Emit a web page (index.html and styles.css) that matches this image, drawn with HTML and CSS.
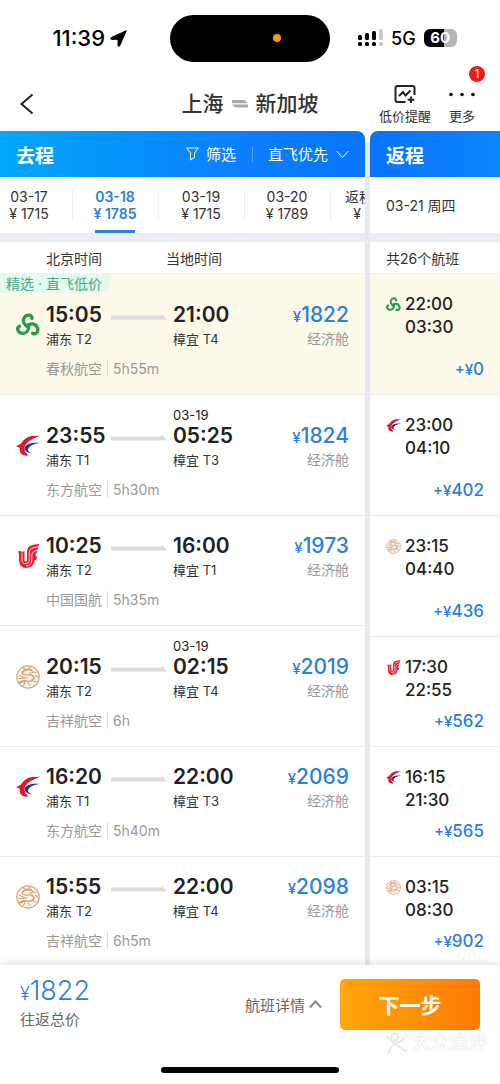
FILE: index.html
```html
<!DOCTYPE html>
<html lang="zh-CN">
<head>
    <meta charset="UTF-8">
    <meta name="viewport" content="width=device-width, initial-scale=1.0">
    <title>上海 - 新加坡</title>
    <link rel="stylesheet" href="styles.css">
</head>
<body>
    <!-- airline logos -->
    <svg class="sprite" aria-hidden="true">
        <symbol id="spring" viewBox="0 0 24 24">
            <g fill="none" stroke="#2a9a4c" stroke-width="3.3" stroke-linecap="round">
                <path d="M12.5 14.5C8 12 6 8 8.500 4.500C10.500 1 16 1.200 16 5.500"/>
                <path d="M12.5 14.5C8 12 6 8 8.500 4.500C10.500 1 16 1.200 16 5.500" transform="rotate(120 12 13)"/>
                <path d="M12.5 14.5C8 12 6 8 8.500 4.500C10.500 1 16 1.200 16 5.500" transform="rotate(240 12 13)"/>
            </g>
        </symbol>
        <symbol id="eastern" viewBox="0 0 24 24">
            <path fill="#e0162b" d="M0 12.500L5 9.500C8 4.500 13 2 17 2L24 1.800C16 5 9.500 8.500 8.500 13C8 16 9.500 19 12.500 21.500C9 22 6 21 4.500 19C3.500 17 4 15 3.500 13.500Z"/>
            <path fill="#27348b" d="M24 9C16 8 9.500 10 8.500 14C8.500 17 12 19 16 19.500C12 17.500 11 16 13 13.500C15 11 19 9.500 24 9Z"/>
        </symbol>
        <symbol id="airchina" viewBox="0 0 24 24">
            <path fill="#df2433" d="M23.500 0C16 .5 11.500 2 11 7V16C11 18 8.500 18 8.500 16V7C6.500 8.500 5 7 2.500 7C2 9 3.500 10 3 13C2.500 18 4 24 10 24C15 24 18.500 21 18.500 16.500C21.500 16 21.500 12.500 19.500 11.500C19 10 21 8.500 21.500 7C19 7.500 22 5 22.500 3.500C21 3.500 23 1.500 23.500 0Z"/>
            <g fill="none" stroke="#fff" stroke-width=".8">
                <path d="M22 3C17 3.500 13.500 4.500 13.300 8.500V16.500C13 20.500 7 21 6 17V8.500"/>
                <path d="M21 6.500C18 7 15.800 8 15.800 11.500V17C15.500 20 13 22 10 22"/>
            </g>
        </symbol>
        <symbol id="juneyao" viewBox="0 0 24 24">
            <circle cx="12" cy="12" r="11.200" fill="#fbf4ec" stroke="#d0a57c" stroke-width="1.200"/>
            <g fill="none" stroke="#d0a57c" stroke-linecap="round">
                <path stroke-width="2" d="M15 5C11 3.500 6 5.500 6.500 8.500C7.500 11 12 8.500 16 10.500C20 13 17 16.500 12 16C9 15.500 7 16 4 17.500"/>
                <path stroke-width="1.200" d="M3.500 10C5 11 6 12 8.500 12.500M15 5L17 7L20 7.500M17 7.500L13.500 8M3 13.500L8 13.500L11 12.500M12 18L14 20.500M9 17.500L7.500 20.500M17 16L20 17M9 4L7 2.800M12.500 3.500L14 2.500M19.500 10.500L21.500 12"/>
                <path stroke-width=".7" stroke="#fbf4ec" d="M7.500 8.500C10 10 14 9 16.500 12M10 16L15 15"/>
            </g>
        </symbol>
    </svg>

    <div class="status">
        <div class="clock">11:39
            <svg width="17" height="17" viewBox="0 0 17 17"><path d="M16.300 .7L9.800 15.500C9.300 16.800 8 16.500 8 15.200V9.300H1.800C.4 9.300 .2 8 1.500 7.400Z" stroke="#000" stroke-linejoin="round"/></svg>
        </div>
        <div class="island"><span class="mic"></span></div>
        <div class="signal">
            <svg width="25" height="18" viewBox="0 0 25 18">
                <g fill="#000"><rect x="0" y="6" width="4" height="5" rx="1.500"/><rect x="7" y="4" width="4" height="7" rx="1.500"/><rect x="14" y="2" width="4" height="9" rx="1.500"/>
                <rect x="0" y="13" width="4" height="4" rx="1.500"/><rect x="7" y="13" width="4" height="4" rx="1.500"/><rect x="14" y="13" width="4" height="4" rx="1.500"/></g>
                <g fill="#c9c9c9"><rect x="21" y="0" width="4" height="11" rx="1.500"/><rect x="21" y="13" width="4" height="4" rx="1.500"/></g>
            </svg>
            <span>5G</span>
            <span class="battery">60</span>
        </div>
    </div>

    <header class="nav">
        <button class="back" aria-label="返回">
            <svg width="14" height="22" viewBox="0 0 14 22"><path d="M12.500 1.500L1.500 11L12.500 20.500"/></svg>
        </button>
        <h1>上海
            <svg width="16" height="10" viewBox="0 0 16 10"><path d="M0 1H12.500L16 4.200H0ZM0 5.400H16V8.600H3.500Z"/></svg>
            新加坡</h1>
        <div class="tools">
            <button class="tool">
                <svg width="22" height="19" viewBox="0 0 22 19"><path d="M11.500 17H3.500Q1.500 17 1.500 15V3Q1.500 1 3.500 1H18.500Q20.500 1 20.500 3V10M5 11L9 7L11.500 10.500L16.500 5.500M17 11.500V18M13.700 14.700H20.300"/></svg>
                低价提醒
            </button>
            <button class="tool more">
                <svg width="26" height="19" viewBox="0 0 26 19"><circle cx="2" cy="9.500" r="1.800"/><circle cx="13" cy="9.500" r="1.800"/><circle cx="24" cy="9.500" r="1.800"/></svg>
                更多
                <span class="badge">1</span>
            </button>
        </div>
    </header>

    <main class="trips">
        <section class="depart">
            <div class="bar">
                <h2>去程</h2>
                <button class="filter">
                    <svg width="13" height="14" viewBox="0 0 13 14"><path d="M.7 1H12.300L8.500 6V10.500L4.500 13V6Z"/></svg>
                    筛选
                </button>
                <button class="sort">
                    直飞优先
                    <svg width="13" height="9" viewBox="0 0 13 9"><path d="M.7 1L6.500 7.500L12.300 1"/></svg>
                </button>
            </div>
            <div class="dates">
                <button>03-17<br>¥ 1715</button>
                <button class="active">03-18<br>¥ 1785</button>
                <button>03-19<br>¥ 1715</button>
                <button>03-20<br>¥ 1789</button>
                <button>返程低价<br>¥ 1715</button>
            </div>
            <div class="heading"><span class="from">北京时间</span><span>当地时间</span></div>
            <ul>
                <li class="flight tall selected">
                    <span class="tag">精选 · 直飞低价</span>
                    <svg class="logo"><use href="#spring"/></svg>
                    <div class="stop"><b>15:05</b><span>浦东 T2</span></div>
                    <svg class="arrow" viewBox="0 0 56 6"><path d="M0 1.500H50L51 0L56 5.500H0Z"/></svg>
                    <div class="stop"><b>21:00</b><span>樟宜 T4</span></div>
                    <div class="price"><b><small>¥</small>1822</b><span>经济舱</span></div>
                    <p><span>春秋航空</span>5h55m</p>
                </li>
                <li class="flight tall">
                    <time>03-19</time>
                    <svg class="logo"><use href="#eastern"/></svg>
                    <div class="stop"><b>23:55</b><span>浦东 T1</span></div>
                    <svg class="arrow" viewBox="0 0 56 6"><path d="M0 1.500H50L51 0L56 5.500H0Z"/></svg>
                    <div class="stop"><b>05:25</b><span>樟宜 T3</span></div>
                    <div class="price"><b><small>¥</small>1824</b><span>经济舱</span></div>
                    <p><span>东方航空</span>5h30m</p>
                </li>
                <li class="flight">
                    <svg class="logo"><use href="#airchina"/></svg>
                    <div class="stop"><b>10:25</b><span>浦东 T2</span></div>
                    <svg class="arrow" viewBox="0 0 56 6"><path d="M0 1.500H50L51 0L56 5.500H0Z"/></svg>
                    <div class="stop"><b>16:00</b><span>樟宜 T1</span></div>
                    <div class="price"><b><small>¥</small>1973</b><span>经济舱</span></div>
                    <p><span>中国国航</span>5h35m</p>
                </li>
                <li class="flight tall">
                    <time>03-19</time>
                    <svg class="logo"><use href="#juneyao"/></svg>
                    <div class="stop"><b>20:15</b><span>浦东 T2</span></div>
                    <svg class="arrow" viewBox="0 0 56 6"><path d="M0 1.500H50L51 0L56 5.500H0Z"/></svg>
                    <div class="stop"><b>02:15</b><span>樟宜 T4</span></div>
                    <div class="price"><b><small>¥</small>2019</b><span>经济舱</span></div>
                    <p><span>吉祥航空</span>6h</p>
                </li>
                <li class="flight">
                    <svg class="logo"><use href="#eastern"/></svg>
                    <div class="stop"><b>16:20</b><span>浦东 T1</span></div>
                    <svg class="arrow" viewBox="0 0 56 6"><path d="M0 1.500H50L51 0L56 5.500H0Z"/></svg>
                    <div class="stop"><b>22:00</b><span>樟宜 T3</span></div>
                    <div class="price"><b><small>¥</small>2069</b><span>经济舱</span></div>
                    <p><span>东方航空</span>5h40m</p>
                </li>
                <li class="flight">
                    <svg class="logo"><use href="#juneyao"/></svg>
                    <div class="stop"><b>15:55</b><span>浦东 T2</span></div>
                    <svg class="arrow" viewBox="0 0 56 6"><path d="M0 1.500H50L51 0L56 5.500H0Z"/></svg>
                    <div class="stop"><b>22:00</b><span>樟宜 T4</span></div>
                    <div class="price"><b><small>¥</small>2098</b><span>经济舱</span></div>
                    <p><span>吉祥航空</span>6h5m</p>
                </li>
            </ul>
        </section>

        <section class="return">
            <div class="bar"><h2>返程</h2></div>
            <div class="day">03-21 周四</div>
            <div class="heading">共26个航班</div>
            <ul>
                <li class="back-flight tall selected">
                    <div class="times"><svg class="mini"><use href="#spring"/></svg><div>22:00<br>03:30</div></div>
                    <b><small>+¥</small>0</b>
                </li>
                <li class="back-flight tall">
                    <div class="times"><svg class="mini"><use href="#eastern"/></svg><div>23:00<br>04:10</div></div>
                    <b><small>+¥</small>402</b>
                </li>
                <li class="back-flight tall">
                    <div class="times"><svg class="mini"><use href="#juneyao"/></svg><div>23:15<br>04:40</div></div>
                    <b><small>+¥</small>436</b>
                </li>
                <li class="back-flight">
                    <div class="times"><svg class="mini"><use href="#airchina"/></svg><div>17:30<br>22:55</div></div>
                    <b><small>+¥</small>562</b>
                </li>
                <li class="back-flight">
                    <div class="times"><svg class="mini"><use href="#eastern"/></svg><div>16:15<br>21:30</div></div>
                    <b><small>+¥</small>565</b>
                </li>
                <li class="back-flight">
                    <div class="times"><svg class="mini"><use href="#juneyao"/></svg><div>03:15<br>08:30</div></div>
                    <b><small>+¥</small>902</b>
                </li>
            </ul>
        </section>
    </main>

    <footer>
        <div class="checkout">
            <div class="total"><strong><small>¥</small>1822</strong><span>往返总价</span></div>
            <button class="details">
                航班详情
                <svg width="13" height="9" viewBox="0 0 13 9"><path d="M1 7.500L6.500 1.500L12 7.500"/></svg>
            </button>
            <button class="next">下一步</button>
        </div>
        <div class="home"></div>
        <div class="watermark">
            <svg width="24" height="22" viewBox="0 0 24 22"><circle cx="10" cy="5" r="3.500"/><path d="M2 4C4 8 7 10 10 11C7 14 5 17 3 21M10 11C14 11 18 8 20 5M10 13C15 13 16 18 22 19"/></svg>
            大众点评
        </div>
    </footer>
</body>
</html>
```
FILE: styles.css
```css
* {
    box-sizing: border-box;
}

body {
    margin: 0;
    height: 100vh;
    display: flex;
    flex-direction: column;
    overflow: hidden;
    background-color: #fff;
    color: #333;
    font-family: Inter, "Noto Sans CJK SC", sans-serif;
    font-size: 14px;
}

h1, h2, ul, p {
    margin: 0;
    padding: 0;
    list-style: none;
}

button {
    background: none;
    border: none;
    padding: 0;
    color: inherit;
    font: inherit;
    cursor: pointer;
}

svg {
    flex-shrink: 0;
}

/* currency signs must not stretch their line */
small {
    line-height: 0;
}

.sprite {
    position: absolute;
    width: 0;
    height: 0;
}

/* status bar */
.status {
    display: grid;
    grid-template-columns: 1fr 160px 1fr;
    align-items: center;
    height: 76px;
    color: #000;
}

.clock {
    display: flex;
    align-items: center;
    justify-content: flex-end;
    gap: 5px;
    padding-right: 43px;
    font-size: 22px;
    font-weight: 500;
}

.island {
    display: flex;
    align-items: center;
    justify-content: flex-end;
    height: 47px;
    padding-right: 49px;
    border-radius: 24px;
    background-color: #000;
}

.mic {
    width: 8px;
    height: 8px;
    border-radius: 50%;
    background-color: #ff9417;
}

.signal {
    display: flex;
    align-items: center;
    gap: 8px;
    padding-left: 28px;
    font-size: 18px;
    font-weight: 500;
}

.battery {
    width: 33px;
    border-radius: 6px;
    background: linear-gradient(to right, #000 60%, #b5b5b5 60%);
    color: #fff;
    font-size: 15px;
    font-weight: 700;
    line-height: 18px;
    text-align: center;
}

/* title bar */
.nav {
    display: grid;
    grid-template-columns: 1fr auto 1fr;
    align-items: center;
    height: 55px;
    padding: 0 20px;
}

.back {
    justify-self: start;
    display: flex;
}

.back path {
    fill: none;
    stroke: #222;
    stroke-width: 2;
}

h1 {
    display: flex;
    align-items: center;
    gap: 8px;
    font-size: 21px;
    font-weight: 500;
    line-height: 30px;
}

h1 path {
    fill: #aaa;
}

.tools {
    justify-self: end;
    display: flex;
    gap: 18px;
    padding: 3px 5px 0 0;
}

.tool {
    display: flex;
    flex-direction: column;
    align-items: center;
    gap: 2px;
    font-size: 13px;
    line-height: 20px;
}

.tool path {
    fill: none;
    stroke: #222;
    stroke-width: 2;
}

.more {
    position: relative;
}

.badge {
    position: absolute;
    top: -19px;
    right: -10px;
    width: 16px;
    border-radius: 8px;
    background-color: #ec1c1c;
    color: #fff;
    font-size: 12px;
    line-height: 16px;
    text-align: center;
}

/* two lists side by side */
.trips {
    flex: 1;
    min-height: 0;
    display: grid;
    grid-template-columns: 73fr 26fr;
    gap: 5px;
    overflow: hidden;
    background: linear-gradient(#fff 12px, #e6e9ef 12px);
}

.depart, .return {
    min-width: 0;
}

.bar {
    display: flex;
    align-items: center;
    height: 46px;
    padding: 0 16px;
    background: linear-gradient(to right, #02a7fa, #0b7dfd 70%, #0675fb);
    color: #fff;
    font-size: 15px;
}

.depart .bar {
    border-radius: 0 8px 0 0;
}

.return .bar {
    border-radius: 8px 0 0 0;
    background: linear-gradient(to right, #0873fb, #0a86fb);
}

.bar h2 {
    font-size: 19px;
    font-weight: 600;
}

.bar svg {
    fill: none;
    stroke: #fff;
}

.filter {
    display: flex;
    align-items: center;
    gap: 7px;
    margin-left: auto;
    padding-right: 16px;
    border-right: 1px solid #58a8ff;
    line-height: 15px;
}

.sort {
    display: flex;
    align-items: center;
    gap: 8px;
    padding-left: 15px;
    line-height: 15px;
}

.dates, .day {
    height: 65px;
    border-bottom: 9px solid #ebedf2;
    background-color: #fff;
}

/* the strip is scrolled a little, the first day is partly out */
.dates {
    display: flex;
    align-items: center;
    overflow: hidden;
}

.dates button {
    position: relative;
    flex: 0 0 86px;
    height: 56px;
    line-height: 17px;
}

.dates button:first-child {
    margin-left: -14px;
}

.dates button + button::before {
    content: "";
    position: absolute;
    left: 0;
    top: 13px;
    width: 1px;
    height: 30px;
    background-color: #eee;
}

.dates .active {
    color: #2b80dd;
    font-weight: 600;
}

.dates .active::after {
    content: "";
    position: absolute;
    left: 23px;
    bottom: 0;
    width: 40px;
    height: 3px;
    background-color: #2b80dd;
}

.day {
    display: flex;
    align-items: center;
    padding-left: 16px;
}

.heading {
    display: flex;
    align-items: center;
    height: 32px;
    padding-left: 16px;
    border-bottom: 1px solid #f0f0ee;
    background-color: #fff;
}

.depart .heading {
    padding-left: 46px;
}

.from {
    width: 120px;
}

/* outbound flights */
.flight {
    position: relative;
    display: grid;
    grid-template-columns: 24px 59px 56px 65px 1fr;
    column-gap: 6px;
    padding: 16px 16px 15px;
    border-bottom: 1px solid #ececec;
    background-color: #fff;
}

.flight.tall {
    padding-top: 27px;
}

.flight time {
    grid-column: 4 / -1;
    margin-top: -14px;
    color: #222;
    font-size: 13px;
    line-height: 14px;
}

.flight.selected {
    background-color: #fcf9e8;
}

.tag {
    position: absolute;
    top: 0;
    left: 0;
    padding: 0 8px 0 6px;
    border-radius: 0 0 8px 0;
    background-color: #e5f7ee;
    color: #41ad8c;
    line-height: 19px;
}

.logo {
    grid-column: 1;
    align-self: center;
    width: 24px;
    height: 24px;
}

.stop {
    display: flex;
    flex-direction: column;
    white-space: nowrap;
    font-size: 13px;
    line-height: 20px;
}

.stop b {
    color: #222;
    font-size: 21px;
    font-weight: 600;
    line-height: 28px;
}

.arrow {
    width: 56px;
    height: 6px;
    margin-top: 13px;
    fill: #dcdcdc;
}

.price {
    display: flex;
    flex-direction: column;
    align-items: flex-end;
    color: #999;
    line-height: 20px;
}

.price b {
    color: #2b80dd;
    font-size: 21px;
    font-weight: 500;
    line-height: 28px;
}

.price small {
    font-size: 15px;
}

.flight p {
    grid-column: 2 / -1;
    margin-top: 10px;
    color: #999;
    line-height: 20px;
}

.flight p span {
    margin-right: 5px;
    padding-right: 5px;
    border-right: 1px solid #ddd;
}

/* return flights */
.back-flight {
    display: flex;
    flex-direction: column;
    justify-content: space-between;
    min-height: 110px;
    padding: 19px 16px 15px;
    border-bottom: 1px solid #ececec;
    background-color: #fff;
    font-size: 17px;
}

.back-flight.tall {
    min-height: 121px;
}

.back-flight.selected {
    background-color: #fcf9e8;
}

.times {
    display: flex;
    gap: 4px;
    color: #222;
    font-weight: 500;
    line-height: 23px;
}

.mini {
    width: 15px;
    height: 15px;
    margin-top: 4px;
}

.back-flight b {
    color: #2b80dd;
    font-weight: 500;
    line-height: 20px;
    text-align: right;
}

.back-flight small {
    font-size: 15px;
}

/* bottom bar */
footer {
    position: relative;
    height: 119px;
    background-color: #fff;
    box-shadow: 0 -1px 8px rgba(0, 0, 0, 0.14);
}

.checkout {
    display: flex;
    align-items: center;
    padding: 10px 20px 0;
    color: #666;
    font-size: 15px;
}

.total {
    display: flex;
    flex-direction: column;
    line-height: 26px;
}

.total strong {
    color: #2b80dd;
    font-size: 27px;
    font-weight: 300;
    line-height: 32px;
}

.total small {
    font-size: 18px;
}

.details {
    display: flex;
    align-items: center;
    gap: 4px;
    margin-left: auto;
}

.details path {
    fill: none;
    stroke: #888;
    stroke-width: 2;
}

.next {
    width: 140px;
    height: 51px;
    margin-left: 18px;
    border-radius: 5px;
    background: linear-gradient(to right, #ffa70d, #ff7a03);
    color: #fff;
    font-size: 21px;
    font-weight: 600;
}

.home {
    width: 178px;
    height: 6px;
    margin: 34px auto 0;
    border-radius: 3px;
    background-color: #000;
}

.watermark {
    position: absolute;
    right: 12px;
    bottom: 29px;
    display: flex;
    align-items: center;
    gap: 3px;
    color: #fff;
    font-size: 19px;
    line-height: 24px;
    text-shadow: 0 0 2px #ccc;
}

.watermark svg {
    fill: none;
    stroke: #e6e6e6;
    stroke-width: 2;
}
```
